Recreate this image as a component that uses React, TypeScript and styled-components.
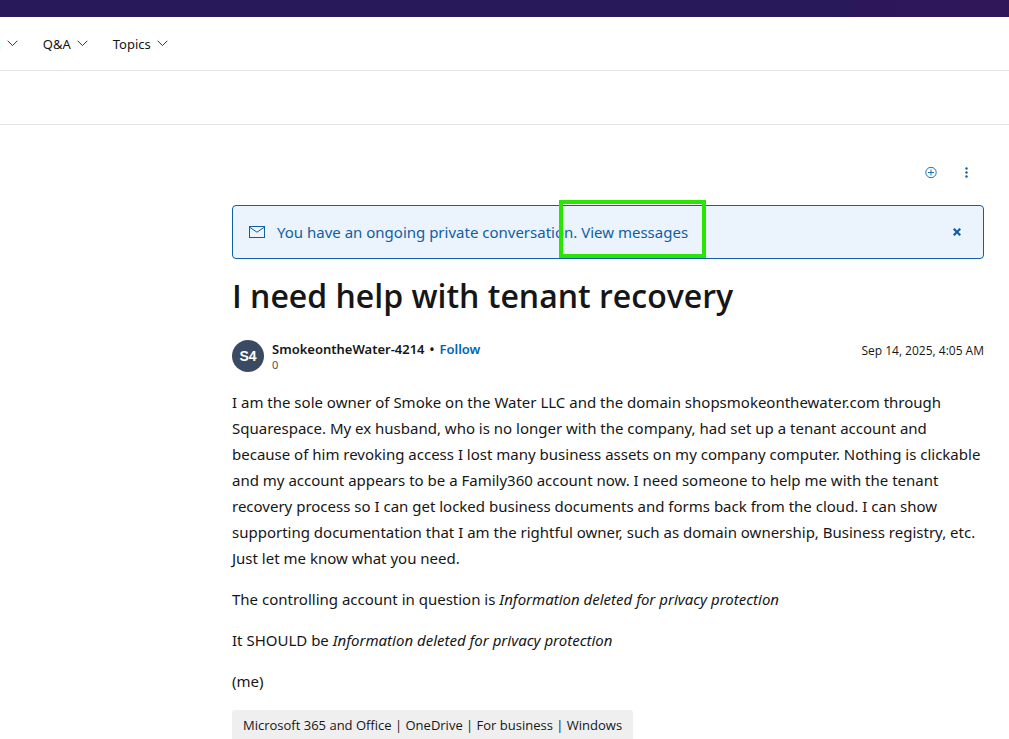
import React from "react";
import styled, { createGlobalStyle } from "styled-components";

const GlobalStyle = createGlobalStyle`
  *, *::before, *::after { box-sizing: border-box; }
  body {
    margin: 0;
    background: #fff;
    color: #161616;
    font: 15px/26px "Noto Sans", "Open Sans", sans-serif;
  }
  button { font: inherit; color: inherit; background: none; border: 0; padding: 0; cursor: pointer; }
  h1, p { margin: 0; }
  svg { display: block; }
`;

const TopBar = styled.div`
  height: 17px;
  background: linear-gradient(90deg, #27195a 0 83%, #2d175a 86%, #30175a 100%);
`;

const Nav = styled.nav`
  display: flex;
  align-items: center;
  gap: 25px;
  height: 54px;
  overflow: hidden;
  border-bottom: 1px solid #e3e3e3;
`;

const NavButton = styled.button<{ $current?: boolean }>`
  display: flex;
  align-items: center;
  gap: 6px;
  margin-left: ${(p) => (p.$current ? "-49px" : "0")};
  font-size: 13px;
  line-height: 20px;
  white-space: nowrap;
  span { color: ${(p) => (p.$current ? "#0078d4" : "inherit")}; }
`;

const SubBar = styled.div`
  height: 54px;
  border-bottom: 1px solid #e3e3e3;
`;

const Main = styled.main`
  padding: 32px 25px 0 232px;
`;

const Actions = styled.div`
  display: flex;
  justify-content: flex-end;
  gap: 4px;
  padding-right: 1px;
  color: #0065b3;
`;

const IconButton = styled.button`
  display: grid;
  place-items: center;
  width: 32px;
  height: 32px;
`;

const Banner = styled.section`
  display: flex;
  align-items: center;
  height: 54px;
  margin-top: 16px;
  padding: 0 10px 0 16px;
  border: 1px solid #115ea3;
  border-radius: 4px;
  background: #ebf3fc;
  color: #115ea3;
`;

const BannerText = styled.p`
  flex: 1;
  margin-left: 12px;
  white-space: nowrap;
`;

const MessagesLink = styled.a`
  position: relative;
  color: inherit;
  text-decoration: none;
  &::after {
    content: "";
    position: absolute;
    inset: -22px -18px -16px -22px;
    border: 4px solid #2ae500;
    pointer-events: none;
  }
`;

const Title = styled.h1`
  margin-top: 14px;
  font-family: "Open Sans", "Noto Sans", sans-serif;
  font-size: 32px;
  line-height: 46px;
  font-weight: 600;
`;

const Byline = styled.div`
  display: flex;
  align-items: center;
  gap: 8px;
  margin-top: 21px;
`;

const Avatar = styled.div`
  display: grid;
  place-items: center;
  width: 32px;
  height: 32px;
  border-radius: 50%;
  background: #3b4a63;
  color: #fff;
  font: 700 14px/16px "Liberation Sans", sans-serif;
`;

const Author = styled.div`
  flex: 1;
  font-size: 13px;
  line-height: 18px;
  font-weight: 600;
`;

const Bullet = styled.span`
  margin: 0 5px;
`;

const FollowButton = styled.button`
  color: #0065b3;
  font-weight: 600;
`;

const Reputation = styled.div`
  font-size: 11px;
  line-height: 14px;
  font-weight: 400;
  color: #505050;
`;

const PostDate = styled.time`
  font-family: "Open Sans", "Noto Sans", sans-serif;
  font-size: 12px;
  line-height: 16px;
  align-self: flex-start;
  padding-top: 3px;
`;

const Post = styled.article`
  display: grid;
  gap: 15px;
  margin-top: 17px;
`;

const Tag = styled.a`
  display: inline-block;
  margin-top: 16px;
  padding: 5px 11px 4px;
  border-radius: 3px 3px 0 0;
  background: #efefef;
  color: inherit;
  font-family: "Open Sans", "Noto Sans", sans-serif;
  font-size: 13px;
  line-height: 20px;
  text-decoration: none;
  vertical-align: top;
`;

const Chevron = () => (
  <svg width="11" height="7" viewBox="0 0 11 7" fill="none" stroke="#333" aria-hidden="true">
    <path d="M.7 .8 5.5 5.6 10.3 .8" />
  </svg>
);

export default function App() {
  return (
    <>
      <GlobalStyle />
      <TopBar />
      <Nav>
        <NavButton $current><span>Training</span><Chevron /></NavButton>
        <NavButton><span>Q&amp;A</span><Chevron /></NavButton>
        <NavButton><span>Topics</span><Chevron /></NavButton>
      </Nav>
      <SubBar />
      <Main>
        <Actions>
          <IconButton aria-label="Add">
            <svg width="12" height="12" viewBox="0 0 12 12" fill="none" stroke="currentColor" strokeWidth=".9">
              <circle cx="6" cy="5.5" r="5.2" />
              <path d="M6 2.5v6M3 5.5h6" />
            </svg>
          </IconButton>
          <IconButton aria-label="More actions">
            <svg width="4" height="12" viewBox="0 0 4 12" fill="currentColor">
              <circle cx="1.5" cy="1.5" r="1.2" />
              <circle cx="1.5" cy="5.5" r="1.2" />
              <circle cx="1.5" cy="9.5" r="1.2" />
            </svg>
          </IconButton>
        </Actions>
        <Banner>
          <svg width="16" height="12" viewBox="0 0 16 12" fill="none" stroke="currentColor" aria-hidden="true">
            <rect x=".5" y=".5" width="15" height="11" />
            <path d="M.6 1.2 8 6.2l7.4-5" />
          </svg>
          <BannerText>
            You have an ongoing private conversation. <MessagesLink href="#messages">View messages</MessagesLink>
          </BannerText>
          <IconButton aria-label="Dismiss">
            <svg width="8" height="8" viewBox="0 0 8 8" fill="none" stroke="currentColor" strokeWidth="2.2">
              <path d="M.7 .7l6.6 6.6M7.3 .7.7 7.3" />
            </svg>
          </IconButton>
        </Banner>
        <Title>I need help with tenant recovery</Title>
        <Byline>
          <Avatar>S4</Avatar>
          <Author>
            SmokeontheWater-4214<Bullet>•</Bullet><FollowButton>Follow</FollowButton>
            <Reputation>0</Reputation>
          </Author>
          <PostDate dateTime="2025-09-14T04:05">Sep 14, 2025, 4:05 AM</PostDate>
        </Byline>
        <Post>
          <p>
            I am the sole owner of Smoke on the Water LLC and the domain shopsmokeonthewater.com through<br />
            Squarespace. My ex husband, who is no longer with the company, had set up a tenant account and<br />
            because of him revoking access I lost many business assets on my company computer. Nothing is clickable<br />
            and my account appears to be a Family360 account now. I need someone to help me with the tenant<br />
            recovery process so I can get locked business documents and forms back from the cloud. I can show<br />
            supporting documentation that I am the rightful owner, such as domain ownership, Business registry, etc.<br />
            Just let me know what you need.
          </p>
          <p>The controlling account in question is <em>Information deleted for privacy protection</em></p>
          <p>It SHOULD be <em>Information deleted for privacy protection</em></p>
          <p>(me)</p>
        </Post>
        <Tag href="#tags">Microsoft 365 and Office | OneDrive | For business | Windows</Tag>
      </Main>
    </>
  );
}
